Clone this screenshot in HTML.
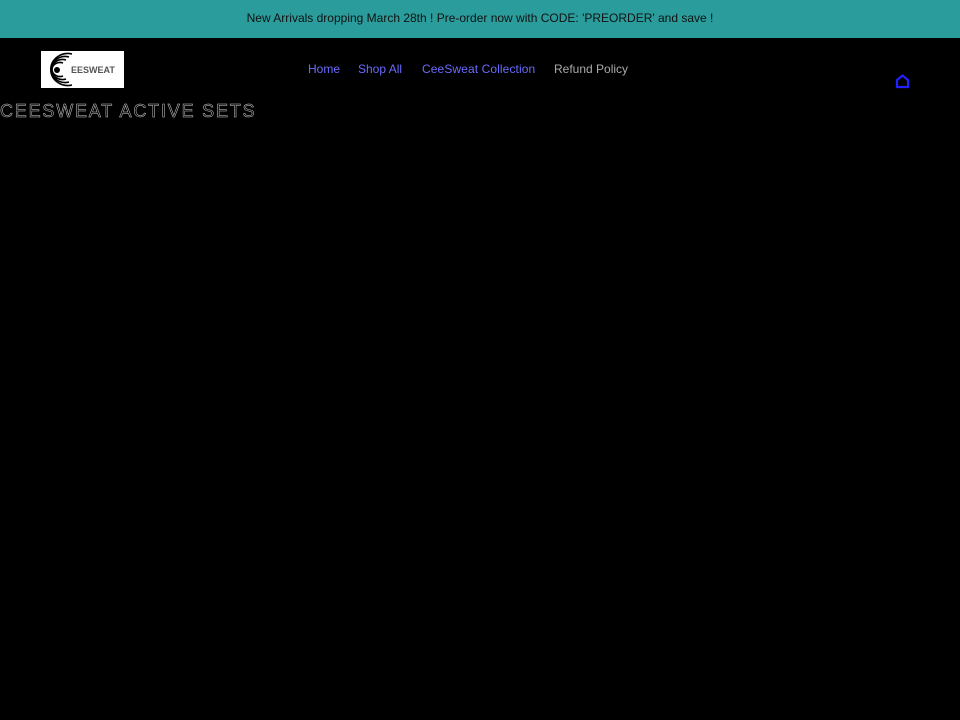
<!DOCTYPE html>
<html><head><meta charset="utf-8"><style>
body{margin:0;width:960px;height:720px;background:#000;overflow:hidden;font-family:"Liberation Sans",sans-serif;position:relative}
.bar{position:absolute;left:0;top:0;width:960px;height:38px;background:#2a9c9c;color:#111;font-size:12px;text-align:center;line-height:37px}
.logo{position:absolute;left:41px;top:51px;width:83px;height:37px;background:#fff}
nav{position:absolute;top:62px;left:308px;font-size:12px}
nav span{position:absolute;white-space:nowrap;color:#6b6bff}
h1{position:absolute;left:0;top:101px;margin:0;font-size:18px;font-weight:normal;letter-spacing:1.8px;color:transparent;-webkit-text-stroke:0.5px #ccc;white-space:nowrap}
</style></head><body>
<div class="bar">New Arrivals dropping March 28th ! Pre-order now with CODE: 'PREORDER' and save !</div>
<div class="logo"><svg width="83" height="37" viewBox="0 0 83 37">
<g fill="none" stroke="#000" stroke-width="1.6">
<path d="M28 6 A14 13 0 1 0 28 31"/><path d="M25 9 A11 10 0 1 0 25 28"/><path d="M22 12 A8 7 0 1 0 22 25"/><path d="M31 3 A17 16 0 1 0 31 34"/></g>
<circle cx="16" cy="19" r="3" fill="#000"/>
<text x="30" y="22" font-size="9" font-weight="bold" font-family="Liberation Sans" fill="#555">EESWEAT</text></svg></div>
<nav><span style="left:0">Home</span><span style="left:50px">Shop All</span><span style="left:114px;letter-spacing:0.1px">CeeSweat Collection</span><span style="left:246px;color:#aaa">Refund Policy</span></nav>
<svg style="position:absolute;left:895px;top:73px" width="15" height="16" viewBox="0 0 15 16"><path d="M2 7 L7.5 2.5 L13 7 V14 H2 Z" fill="none" stroke="#2222ff" stroke-width="2.2"/></svg>
<h1>CEESWEAT ACTIVE SETS</h1>
</body></html>
